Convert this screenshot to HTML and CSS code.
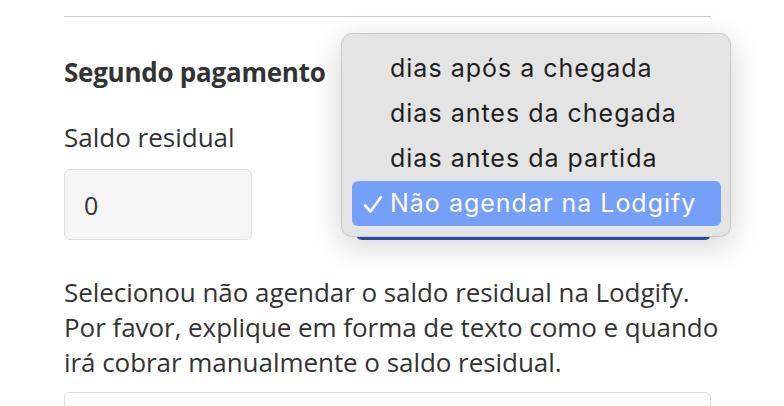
FILE: index.html
```html
<!DOCTYPE html>
<html lang="pt">
<head>
    <meta charset="UTF-8">
    <title>Segundo pagamento</title>
    <link rel="stylesheet" href="styles.css">
</head>
<body>
    <div class="container">
        <hr class="divider">
        <h3 class="section-title">Segundo pagamento</h3>
        <div class="fields">
            <div class="field">
                <label class="field-label">Saldo residual</label>
                <input class="amount" type="text" value="0">
            </div>
            <div class="field">
                <label class="field-label hidden-label">Quando</label>
                <div class="select-box"></div>
            </div>
            <ul class="menu">
                <li class="menu-item">dias após a chegada</li>
                <li class="menu-item">dias antes da chegada</li>
                <li class="menu-item">dias antes da partida</li>
                <li class="menu-item selected">
                    <svg class="check" width="20" height="19" viewBox="0 0 20 19"><path d="M2 10.5 L7.5 16.5 L18 2" fill="none" stroke="#fff" stroke-width="2.6" stroke-linecap="round" stroke-linejoin="round"/></svg>Não agendar na Lodgify
                </li>
            </ul>
        </div>
        <p class="note">Selecionou não agendar o saldo residual na Lodgify. Por favor, explique em forma de texto como e quando irá cobrar manualmente o saldo residual.</p>
        <div class="textarea"></div>
    </div>
</body>
</html>
```

FILE: styles.css
```css
body {
    margin: 0;
    background: #fff;
    font-family: 'Open Sans', sans-serif;
    color: #333;
    overflow: hidden;
    height: 406px;
}
.container {
    width: 647px;
    margin-left: 64px;
    padding-top: 16px;
}
.divider {
    border: none;
    border-top: 1px solid #cfcfcf;
    margin: 0;
}
.section-title {
    font-size: 26px;
    font-weight: 700;
    margin: 38px 0 0;
    line-height: 34px;
    letter-spacing: -0.25px;
}
.fields {
    position: relative;
    display: grid;
    grid-template-columns: 188px 360px;
    column-gap: 99px;
    margin-top: 31px;
}
.field {
    display: flex;
    flex-direction: column;
}
.field-label {
    font-size: 26px;
    line-height: 34px;
    margin-bottom: 15px;
}
.hidden-label {
    visibility: hidden;
}
.amount {
    box-sizing: border-box;
    width: 188px;
    height: 71px;
    border: 1px solid #dedede;
    border-radius: 6px;
    background: #f6f6f6;
    padding: 0 19px;
    font-family: 'Open Sans', sans-serif;
    font-size: 25px;
    color: #333;
}
.select-box {
    height: 71px;
    border-radius: 6px;
    background: #2f55b5;
    margin-left: 5px;
}
.menu {
    position: absolute;
    left: 277px;
    top: -87px;
    width: 390px;
    margin: 0;
    padding: 12px 9px 10px 10px;
    box-sizing: border-box;
    list-style: none;
    background: #e4e4e4;
    border: 1px solid #c9c9c9;
    border-radius: 11px;
    box-shadow: 0 8px 30px rgba(0, 0, 0, 0.18);
    font-family: 'Inter', sans-serif;
    font-size: 25px;
    color: #1f1f1f;
}
.menu-item {
    height: 45px;
    line-height: 45px;
    padding-left: 38px;
    position: relative;
    letter-spacing: 1px;
}
.menu-item.selected {
    background: #74a0fa;
    color: #fff;
    border-radius: 6px;
}
.check {
    position: absolute;
    left: 11px;
    top: 14px;
}
.note {
    width: 664px;
    font-size: 26px;
    line-height: 35px;
    margin: 35px 0 0;
    letter-spacing: -0.05px;
}
.textarea {
    margin-top: 12px;
    height: 60px;
    border: 1px solid #dedede;
    border-radius: 6px;
}
```
